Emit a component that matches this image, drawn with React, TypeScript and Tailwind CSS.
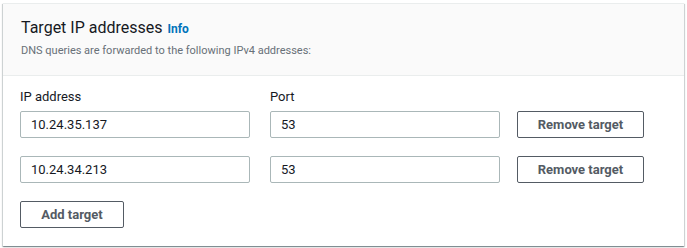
const font = { fontFamily: 'Roboto, "Noto Sans", Arial, sans-serif' };

type Target = { ip: string; port: string };

const targets: Target[] = [
  { ip: '10.24.35.137', port: '53' },
  { ip: '10.24.34.213', port: '53' },
];

function TargetRow({ target }: { target: Target }) {
  return (
    <div className="flex items-center">
      <input
        readOnly
        value={target.ip}
        className="w-[230px] h-[27px] border border-[#aab7b8] rounded-[2px] px-[10px] text-[13px] text-[#16191f] bg-white outline-none"
      />
      <input
        readOnly
        value={target.port}
        className="ml-[20px] w-[230px] h-[27px] border border-[#aab7b8] rounded-[2px] px-[10px] text-[13px] text-[#16191f] bg-white outline-none"
      />
      <button className="ml-[17px] w-[127px] h-[27px] border border-[#545b64] rounded-[2px] text-[13px] font-bold text-[#545b64] bg-white">
        Remove target
      </button>
    </div>
  );
}

export default function App() {
  return (
    <div className="w-[687px] h-[248px] bg-white pt-[3px] pl-[3px]" style={font}>
      <div className="w-[681px] h-[243px] bg-white border-t border-[#eaeded] shadow-[0_1px_1px_0_rgba(0,28,36,0.3),1px_1px_1px_0_rgba(0,28,36,0.15),-1px_1px_1px_0_rgba(0,28,36,0.15)]">
        {/* Header */}
        <div className="h-[72px] bg-[#fafafa] border-b border-[#eaeded] pl-[18px] pt-[13px]">
          <div className="flex items-baseline gap-[5px]">
            <h2 className="text-[16px] leading-[22px] text-[#16191f] font-normal">Target IP addresses</h2>
            <a className="text-[12px] font-bold text-[#0073bb]">Info</a>
          </div>
          <p className="mt-[4px] text-[11px] leading-[16px] text-[#687078]">
            DNS queries are forwarded to the following IPv4 addresses:
          </p>
        </div>

        {/* Body */}
        <div className="pl-[17px] pt-[12px]">
          <div className="flex text-[13px] leading-[18px] text-[#16191f]">
            <span className="w-[250px]">IP address</span>
            <span>Port</span>
          </div>
          <div className="mt-[5px] flex flex-col gap-[18px]">
            {targets.map((t) => (
              <TargetRow key={t.ip} target={t} />
            ))}
          </div>
          <button className="mt-[18px] w-[104px] h-[27px] border border-[#545b64] rounded-[2px] text-[13px] font-bold text-[#545b64] bg-white">
            Add target
          </button>
        </div>
      </div>
    </div>
  );
}
